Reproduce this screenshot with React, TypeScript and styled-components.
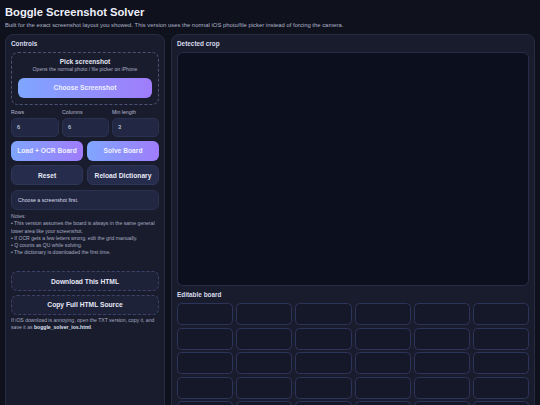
import styled, { createGlobalStyle } from "styled-components";

const GlobalStyle = createGlobalStyle`
  html, body {
    margin: 0;
    padding: 0;
    background: #0f111c;
    color: #e3e6f4;
    font-family: "Liberation Sans", Arial, sans-serif;
  }
  * {
    box-sizing: border-box;
  }
`;

const Page = styled.div`
  padding: 4.5px 5px 0;
  height: 405px;
  overflow: hidden;
`;

const Title = styled.h1`
  margin: 0;
  font-size: 11.2px;
  line-height: 14px;
  font-weight: 700;
  color: #eef0fa;
`;

const Subtitle = styled.p`
  margin: 3px 0 5.5px;
  font-size: 5.9px;
  line-height: 7px;
  color: #aeb3c9;
  white-space: nowrap;
`;

const Layout = styled.div`
  display: grid;
  grid-template-columns: 160px 1fr;
  gap: 6px;
  align-items: start;
`;

const Panel = styled.section`
  background: #191c2d;
  border: 1px solid #272b42;
  border-radius: 8px;
  padding: 5px 5px 0;
  height: 400px;
  display: flex;
  flex-direction: column;

  & > * {
    flex-shrink: 0;
  }
`;

const PanelTitle = styled.div<{ $gap?: number }>`
  font-size: 6.4px;
  line-height: 8px;
  font-weight: 700;
  color: #d7dbec;
  margin-bottom: ${(p) => p.$gap ?? 4}px;
`;

const DropZone = styled.div`
  border: 1px dashed #4b5377;
  border-radius: 7px;
  padding: 5px 6px 6.5px;
  display: flex;
  flex-direction: column;
  align-items: center;
`;

const DropTitle = styled.div`
  font-size: 6.6px;
  line-height: 8px;
  font-weight: 700;
  color: #e4e6f2;
`;

const DropHint = styled.div`
  font-size: 5.1px;
  line-height: 6.5px;
  color: #a9aec4;
  margin-bottom: 5px;
`;

const GradientButton = styled.button`
  width: 100%;
  height: 20px;
  border: none;
  border-radius: 6px;
  background: linear-gradient(90deg, #7fa6ff 0%, #a07cfb 100%);
  color: #eef0ff;
  font-family: inherit;
  font-size: 6.7px;
  font-weight: 700;
  padding: 0;
`;

const SecondaryButton = styled.button<{ $dashed?: boolean }>`
  width: 100%;
  height: 20px;
  border: 1px ${(p) => (p.$dashed ? "dashed #3b4369" : "solid #2f3657")};
  border-radius: 6px;
  background: ${(p) => (p.$dashed ? "#1e2239" : "#262c4b")};
  color: #e6e9f7;
  font-family: inherit;
  font-size: 6.7px;
  font-weight: 700;
  padding: 0;
`;

const FieldRow = styled.div`
  display: grid;
  grid-template-columns: 48px 1fr 1fr;
  gap: 3px;
  margin-top: 4px;
`;

const Field = styled.label`
  display: flex;
  flex-direction: column;
`;

const FieldLabel = styled.span`
  font-size: 5.2px;
  line-height: 7px;
  color: #b7bbd0;
  margin-bottom: 1.5px;
`;

const Input = styled.div`
  height: 19px;
  border: 1px solid #2b3150;
  border-radius: 5px;
  background: #222843;
  color: #dfe2f1;
  font-size: 5.7px;
  display: flex;
  align-items: center;
  padding-left: 5px;
`;

const ButtonGrid = styled.div`
  display: grid;
  grid-template-columns: 1fr 1fr;
  gap: 4.5px 4px;
  margin-top: 4px;
`;

const Status = styled.div`
  margin-top: 4.5px;
  height: 20px;
  border: 1px solid #2b3150;
  border-radius: 6px;
  background: #212641;
  color: #d9dcec;
  font-size: 5.2px;
  display: flex;
  align-items: center;
  padding-left: 6px;
`;

const Notes = styled.div`
  margin-top: 3.5px;
  font-size: 5.1px;
  line-height: 7.3px;
  color: #a7acc2;
`;

const Stack = styled.div`
  display: flex;
  flex-direction: column;
  gap: 3.5px;
  margin-top: 14.5px;
`;

const Footnote = styled.p`
  margin: 2.5px 0 0;
  font-size: 5.1px;
  line-height: 7px;
  color: #a7acc2;

  & b {
    color: #dfe2f1;
  }
`;

const Canvas = styled.div`
  height: 234px;
  border: 1px solid #262c47;
  border-radius: 6px;
  background: #0b0f1e;
  margin-bottom: 5px;
`;

const Board = styled.div<{ $cols: number }>`
  display: grid;
  grid-template-columns: repeat(${(p) => p.$cols}, 1fr);
  gap: 2.5px 3px;
`;

const Cell = styled.div`
  height: 22px;
  border: 1px solid #2d3459;
  border-radius: 4.5px;
  background: #141829;
`;

export default function App() {
  const cells = Array.from({ length: 36 });

  return (
    <>
      <GlobalStyle />
      <Page>
        <Title>Boggle Screenshot Solver</Title>
        <Subtitle>
          Built for the exact screenshot layout you showed. This version uses the normal iOS photo/file picker
          instead of forcing the camera.
        </Subtitle>
        <Layout>
          <Panel>
            <PanelTitle>Controls</PanelTitle>
            <DropZone>
              <DropTitle>Pick screenshot</DropTitle>
              <DropHint>Opens the normal photo / file picker on iPhone</DropHint>
              <GradientButton>Choose Screenshot</GradientButton>
            </DropZone>

            <FieldRow>
              <Field>
                <FieldLabel>Rows</FieldLabel>
                <Input>6</Input>
              </Field>
              <Field>
                <FieldLabel>Columns</FieldLabel>
                <Input>6</Input>
              </Field>
              <Field>
                <FieldLabel>Min length</FieldLabel>
                <Input>3</Input>
              </Field>
            </FieldRow>

            <ButtonGrid>
              <GradientButton>Load + OCR Board</GradientButton>
              <GradientButton>Solve Board</GradientButton>
              <SecondaryButton>Reset</SecondaryButton>
              <SecondaryButton>Reload Dictionary</SecondaryButton>
            </ButtonGrid>

            <Status>Choose a screenshot first.</Status>

            <Notes>
              Notes:
              <br />• This version assumes the board is always in the same general lower area like your screenshot.
              <br />• If OCR gets a few letters wrong, edit the grid manually.
              <br />• Q counts as QU while solving.
              <br />• The dictionary is downloaded the first time.
            </Notes>

            <Stack>
              <SecondaryButton $dashed>Download This HTML</SecondaryButton>
              <SecondaryButton $dashed>Copy Full HTML Source</SecondaryButton>
            </Stack>
            <Footnote>
              If iOS download is annoying, open the TXT version, copy it, and save it as{" "}
              <b>boggle_solver_ios.html</b>.
            </Footnote>
          </Panel>

          <Panel>
            <PanelTitle>Detected crop</PanelTitle>
            <Canvas />
            <PanelTitle>Editable board</PanelTitle>
            <Board $cols={6}>
              {cells.map((_, i) => (
                <Cell key={i} />
              ))}
            </Board>
          </Panel>
        </Layout>
      </Page>
    </>
  );
}
